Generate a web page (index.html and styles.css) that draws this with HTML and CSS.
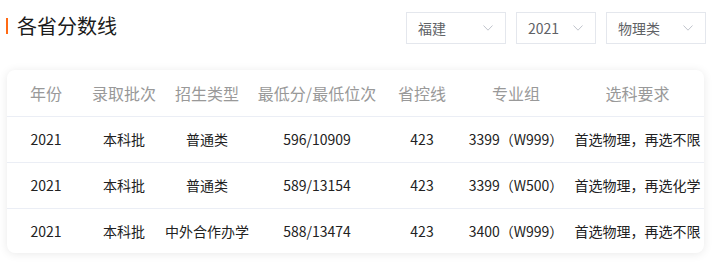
FILE: index.html
```html
<!DOCTYPE html>
<html lang="zh">
<head>
<meta charset="utf-8">
<link rel="stylesheet" href="styles.css">
</head>
<body>
<div class="page">
  <div class="top">
    <h1 class="title">各省分数线</h1>
    <div class="filters">
      <div class="select w100"><span>福建</span><svg class="chev" viewBox="0 0 10 6"><path d="M0.5 0.5 L5 5.2 L9.5 0.5" /></svg></div>
      <div class="select w80"><span>2021</span><svg class="chev" viewBox="0 0 10 6"><path d="M0.5 0.5 L5 5.2 L9.5 0.5" /></svg></div>
      <div class="select w100"><span>物理类</span><svg class="chev" viewBox="0 0 10 6"><path d="M0.5 0.5 L5 5.2 L9.5 0.5" /></svg></div>
    </div>
  </div>
  <div class="card">
    <table class="tbl">
      <colgroup>
        <col class="c1"><col class="c2"><col class="c3"><col class="c4"><col class="c5"><col class="c6"><col class="c7">
      </colgroup>
      <thead>
        <tr><th>年份</th><th>录取批次</th><th>招生类型</th><th>最低分/最低位次</th><th>省控线</th><th>专业组</th><th>选科要求</th></tr>
      </thead>
      <tbody>
        <tr><td>2021</td><td>本科批</td><td>普通类</td><td>596/10909</td><td>423</td><td>3399（W999）</td><td>首选物理，再选不限</td></tr>
        <tr><td>2021</td><td>本科批</td><td>普通类</td><td>589/13154</td><td>423</td><td>3399（W500）</td><td>首选物理，再选化学</td></tr>
        <tr><td>2021</td><td>本科批</td><td>中外合作办学</td><td>588/13474</td><td>423</td><td>3400（W999）</td><td>首选物理，再选不限</td></tr>
      </tbody>
    </table>
  </div>
</div>
</body>
</html>
```
FILE: styles.css
```css
* { box-sizing: border-box; }
html, body { margin: 0; padding: 0; background: #fff; }
body {
  font-family: "Noto Sans CJK SC", "Noto Sans", sans-serif;
  color: #222;
  min-height: 272px;
}
.page { padding: 12px 6px 0 6px; width: 712px; }
.top {
  display: flex;
  justify-content: space-between;
  align-items: center;
  height: 32px;
}
.title {
  margin: 0;
  font-size: 20px;
  font-weight: 400;
  line-height: 28px;
  color: #1a1a1a;
  border-left: 2px solid #ff6a14;
  padding-left: 9px;
  height: 16px;
  display: flex;
  align-items: center;
  margin-top: -4px;
}
.filters { display: flex; gap: 10px; }
.select {
  height: 32px;
  border: 1px solid #e4e7ed;
  display: flex;
  align-items: center;
  justify-content: space-between;
  padding: 0 12px 0 11px;
  font-size: 14px;
  color: #606266;
  line-height: 20px;
}
.w100 { width: 100px; }
.w80 { width: 80px; }
.chev { width: 10px; height: 6px; fill: none; stroke: #c0c4cc; stroke-width: 1; }
.card {
  margin-top: 26px;
  margin-left: 1px;
  width: 697px;
  background: #fff;
  border-radius: 8px;
  box-shadow: 0 1px 10px rgba(0,0,0,0.09);
  overflow: hidden;
}
.tbl { width: 100%; border-collapse: collapse; table-layout: fixed; }
.c1 { width: 78px; }
.c2 { width: 78px; }
.c3 { width: 88px; }
.c4 { width: 132px; }
.c5 { width: 78px; }
.c6 { width: 110px; }
.c7 { width: 133px; }
th {
  font-weight: 400;
  font-size: 16px;
  color: #999;
  height: 46px;
  padding: 0;
  text-align: center;
  white-space: nowrap;
}
td {
  font-size: 14px;
  color: #222;
  height: 46px;
  padding: 0;
  text-align: center;
  white-space: nowrap;
  border-top: 1px solid #ebeef5;
}
tbody tr:last-child td { height: 45px; }
```
